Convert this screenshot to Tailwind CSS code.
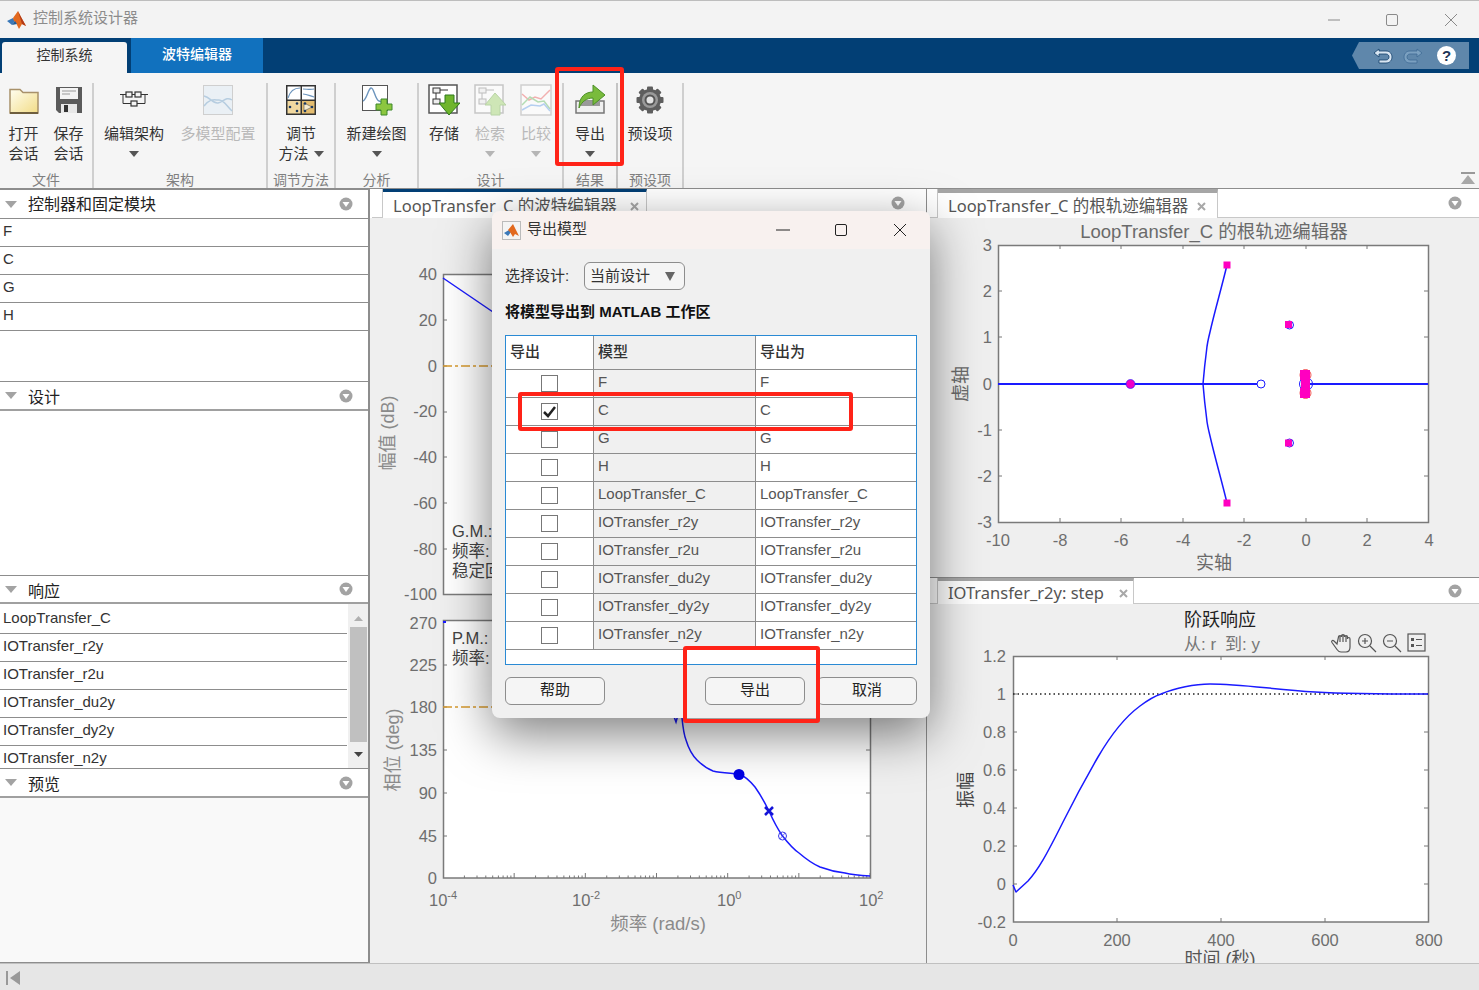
<!DOCTYPE html>
<html lang="zh">
<head>
<meta charset="utf-8">
<title>控制系统设计器</title>
<script src="https://cdn.jsdelivr.net/npm/@tailwindcss/browser@4"></script>
</head>
<body class="m-0 overflow-hidden">
<div class="relative w-[1479px] h-[990px] overflow-hidden bg-[#f3f3f3] text-[15px] text-[#333] [font-family:'Liberation_Sans','Noto_Sans_CJK_SC',sans-serif]">

  <!-- title bar -->
  <div class="flex items-center h-[38px] pl-[7px] border-t border-[#bdbdbd] bg-[#f3f3f3]">
    <svg class="w-[20px] h-[20px] mr-[6px]" viewBox="0 0 20 20"><path d="M0 11l6-3 2 3-3 4z" fill="#3a78b8"/><path d="M6 8l5-7 3 6 5 9-4-2-3 5-3-6-2-2z" fill="#e2691f"/><path d="M11 1l3 6 5 9-4-2z" fill="#b33a16"/><path d="M5 15l3-4 2 3z" fill="#1d5a96"/></svg>
    <span class="text-[15px] text-[#8c8c8c] pb-[2px]">控制系统设计器</span>
    <div class="ml-auto flex items-center">
      <svg class="w-[12px] h-[12px] mr-[46px]" viewBox="0 0 12 12"><path d="M0 6h12" stroke="#8a8a8a"/></svg>
      <svg class="w-[12px] h-[12px] mr-[47px]" viewBox="0 0 12 12"><rect x=".5" y=".5" width="11" height="11" rx="1.5" fill="none" stroke="#8a8a8a"/></svg>
      <svg class="w-[12px] h-[12px] mr-[22px]" viewBox="0 0 12 12"><path d="M0 0l12 12M12 0L0 12" stroke="#8a8a8a"/></svg>
    </div>
  </div>

  <!-- ribbon tabs -->
  <div class="flex items-end h-[35px] bg-[#023f75] pl-[2px]">
    <div class="flex items-center justify-center w-[125px] h-[31px] pb-[5px] bg-[#f5f5f5] rounded-t-[3px] text-[14px] text-[#333]">控制系统</div>
    <div class="flex items-center justify-center w-[132px] h-[35px] pb-[2px] ml-[4px] bg-[#1171be] text-[14px] font-medium text-white">波特编辑器</div>
    <div class="ml-auto mr-[10px] mb-[4px] flex items-center h-[27px] w-[117px] bg-[#5f87ab] [clip-path:polygon(7px_0,100%_0,100%_100%,7px_100%,0_50%)]">
      <svg class="w-[20px] h-[18px] ml-[21px]" viewBox="0 0 20 18"><path d="M6 2L1 6l5 4V7h7c2 0 3 1.500 3 3s-1 3-3 3H6v3h7c4 0 6-3 6-6s-2-6-6-6H6z" fill="#d9e6f2" stroke="#123f6b" stroke-width=".8"/></svg>
      <svg class="w-[20px] h-[18px] ml-[10px]" viewBox="0 0 20 18"><path d="M14 2l5 4-5 4V7H7C5 7 4 8.500 4 10s1 3 3 3h7v3H7c-4 0-6-3-6-6s2-6 6-6h7z" fill="#7ba0c0" stroke="#3f6b94" stroke-width=".8"/></svg>
      <div class="ml-[14px] flex items-center justify-center w-[19px] h-[19px] rounded-full bg-white text-[#1d3557] text-[15px] font-bold leading-none">?</div>
    </div>
  </div>

  <!-- toolstrip -->
  <div class="flex h-[115px] bg-[#f5f5f5] pt-[10px] text-[15px] text-[#333]">
    <!-- 文件 -->
    <div class="flex flex-col w-[94px] border-r-2 border-[#cfcfcf]">
      <div class="flex flex-1 pl-[1px] pt-[1px]">
        <div class="flex flex-col items-center w-[45px]">
          <svg class="w-[32px] h-[32px]" viewBox="0 0 32 32"><defs><linearGradient id="fo" x1="0" y1="0" x2="1" y2="1"><stop offset="0" stop-color="#fffef0"/><stop offset="1" stop-color="#f2dc86"/></linearGradient></defs><path d="M2 8V5.500h10l3 3h15V29H2z" fill="url(#fo)" stroke="#a8916a" stroke-width="1.500"/><path d="M2 29h28" stroke="#6e5e3e" stroke-width="2"/></svg>
          <div class="mt-[8px] leading-[20px] text-center">打开<br>会话</div>
        </div>
        <div class="flex flex-col items-center w-[45px]">
          <svg class="w-[32px] h-[32px]" viewBox="0 0 32 32"><path d="M3 3h26v26H6l-3-3z" fill="#5b5b5b"/><rect x="7" y="4" width="18" height="11" fill="#f4f4f4"/><path d="M9 7h14M9 10h8" stroke="#9a9a9a"/><rect x="8" y="20" width="16" height="9" fill="#e8e8e8"/><rect x="11" y="21" width="4" height="7" fill="#333"/></svg>
          <div class="mt-[8px] leading-[20px] text-center">保存<br>会话</div>
        </div>
      </div>
      <div class="h-[20px] text-center text-[14px] text-[#808080] leading-[24px]">文件</div>
    </div>
    <!-- 架构 -->
    <div class="flex flex-col w-[174px] border-r-2 border-[#cfcfcf]">
      <div class="flex flex-1 pt-[1px]">
        <div class="flex flex-col items-center w-[80px] ml-0">
          <svg class="w-[32px] h-[32px]" viewBox="0 0 32 32"><g fill="#f5f5f5" stroke="#333" stroke-width="1.200"><rect x="8" y="8" width="6" height="5"/><rect x="17" y="8" width="6" height="5"/><rect x="13" y="17" width="6" height="5"/></g><path d="M2 10.500h6M14 10.500h3M23 10.500h7M5 10.500V19.500h8M19 19.500h8V10.500" fill="none" stroke="#333"/></svg>
          <div class="mt-[8px] leading-[20px] whitespace-nowrap">编辑架构</div>
          <svg class="w-[10px] h-[6px] mt-[7px]" viewBox="0 0 10 6"><path d="M0 0h10L5 6z" fill="#555"/></svg>
        </div>
        <div class="flex flex-col items-center w-[88px] ml-[0px] text-[#b9b9b9]">
          <svg class="w-[32px] h-[32px]" viewBox="0 0 32 32"><rect x="1.500" y="1.500" width="29" height="29" fill="#eaf0f5" stroke="#cfcfcf"/><path d="M2 12c6 1 9 8 14 7s8-7 14-3M2 22c6-8 10-6 15-6s7 5 13 11" fill="none" stroke="#b6cde0" stroke-width="1.500"/></svg>
          <div class="mt-[8px] leading-[20px] whitespace-nowrap">多模型配置</div>
        </div>
      </div>
      <div class="h-[20px] text-center text-[14px] text-[#808080] leading-[24px]">架构</div>
    </div>
    <!-- 调节方法 -->
    <div class="flex flex-col w-[68px] border-r-2 border-[#cfcfcf]">
      <div class="flex flex-col flex-1 items-center pt-[1px]">
        <svg class="w-[32px] h-[32px]" viewBox="0 0 32 32"><rect x="1" y="1" width="30" height="30" fill="#333"/><rect x="2.500" y="2.500" width="13" height="13" fill="#fff"/><rect x="17" y="2.500" width="12.500" height="13" fill="#fff"/><rect x="2.500" y="17" width="13" height="12.500" fill="#f2d9a0"/><rect x="17" y="17" width="12.500" height="12.500" fill="#e4bd70"/><path d="M3 14C5 7 9 4 15 4M18 5c4 0 7 1 11 0M18 10c4 0 7 2 11 3" fill="none" stroke="#6d95bd" stroke-width="1.200"/><path d="M19 19l8 4-8 4z" fill="#f7eccf" stroke="#555" stroke-width=".6"/><g fill="#1d3a60"><circle cx="5" cy="23" r="1.300"/><circle cx="12" cy="19.500" r="1.300"/><circle cx="12" cy="27" r="1.300"/><circle cx="20" cy="19.500" r="1.300"/><circle cx="20" cy="27" r="1.300"/><circle cx="27" cy="23" r="1.300"/></g></svg>
        <div class="mt-[8px] leading-[20px] text-center">调节<br><span class="inline-flex items-center">方法<svg class="w-[10px] h-[6px] ml-[5px]" viewBox="0 0 10 6"><path d="M0 0h10L5 6z" fill="#555"/></svg></span></div>
      </div>
      <div class="h-[20px] text-center text-[14px] text-[#808080] leading-[24px] whitespace-nowrap">调节方法</div>
    </div>
    <!-- 分析 -->
    <div class="flex flex-col w-[83px] border-r-2 border-[#cfcfcf]">
      <div class="flex flex-col flex-1 items-center pt-[1px]">
        <svg class="w-[32px] h-[32px]" viewBox="0 0 32 32"><rect x="1.500" y="1.500" width="25" height="25" fill="#fff" stroke="#555"/><path d="M2 17c4-2 5-12 8-13s4 12 8 13 5 2 8 2" fill="none" stroke="#6d95bd" stroke-width="1.400"/><path d="M20 15h6v5h5v6h-5v5h-6v-5h-5v-6h5z" fill="#8cc63f" stroke="#3f8a2c"/></svg>
        <div class="mt-[8px] leading-[20px] whitespace-nowrap">新建绘图</div>
        <svg class="w-[10px] h-[6px] mt-[7px]" viewBox="0 0 10 6"><path d="M0 0h10L5 6z" fill="#555"/></svg>
      </div>
      <div class="h-[20px] text-center text-[14px] text-[#808080] leading-[24px]">分析</div>
    </div>
    <!-- 设计 -->
    <div class="flex flex-col w-[145px] border-r-2 border-[#cfcfcf]">
      <div class="flex flex-1 pl-[2px] pt-[1px]">
        <div class="flex flex-col items-center w-[46px]">
          <svg class="w-[32px] h-[32px]" viewBox="0 0 32 32"><rect x="1" y="1" width="28" height="28" fill="#fff" stroke="#555" stroke-width="1.500"/><g fill="#eee" stroke="#333"><rect x="5" y="4" width="7" height="5"/><rect x="5" y="15" width="7" height="5"/></g><path d="M8 9v6M12 6h8" stroke="#333"/><path d="M17 11h9v8h6L21 31 11 19h6z" fill="#6fb52c" stroke="#2f7a1d"/></svg>
          <div class="mt-[8px] leading-[20px]">存储</div>
        </div>
        <div class="flex flex-col items-center w-[46px] text-[#b9b9b9]">
          <svg class="w-[32px] h-[32px] opacity-50" viewBox="0 0 32 32"><rect x="1" y="1" width="28" height="28" fill="#fff" stroke="#999" stroke-width="1.500"/><g fill="#eee" stroke="#888"><rect x="5" y="4" width="7" height="5"/><rect x="5" y="15" width="7" height="5"/></g><path d="M8 9v6M12 6h8" stroke="#888"/><path d="M17 31V21h-6L21 9l11 12h-6v10z" fill="#a8d878" stroke="#7fb45a"/></svg>
          <div class="mt-[8px] leading-[20px]">检索</div>
          <svg class="w-[10px] h-[6px] mt-[7px]" viewBox="0 0 10 6"><path d="M0 0h10L5 6z" fill="#b5b5b5"/></svg>
        </div>
        <div class="flex flex-col items-center w-[46px] text-[#b9b9b9]">
          <svg class="w-[32px] h-[32px]" viewBox="0 0 32 32"><rect x="1" y="1" width="30" height="30" fill="#fafafa" stroke="#cfcfcf" stroke-width="1.500"/><path d="M2 10l7 6 6-3 6 2 9-9" fill="none" stroke="#f2b0b0" stroke-width="1.500"/><path d="M2 21l8-8 8 5 6-1 6 8" fill="none" stroke="#b4dcb4" stroke-width="1.500"/><path d="M2 26l9-5 9 1 4-2 6 7" fill="none" stroke="#b5cff0" stroke-width="1.500"/></svg>
          <div class="mt-[8px] leading-[20px]">比较</div>
          <svg class="w-[10px] h-[6px] mt-[7px]" viewBox="0 0 10 6"><path d="M0 0h10L5 6z" fill="#b5b5b5"/></svg>
        </div>
      </div>
      <div class="h-[20px] text-center text-[14px] text-[#808080] leading-[24px]">设计</div>
    </div>
    <!-- 结果 -->
    <div class="flex flex-col w-[54px] border-r-2 border-[#c4c4c4]">
      <div class="flex flex-col flex-1 items-center pt-[1px]">
        <svg class="w-[32px] h-[32px]" viewBox="0 0 32 32"><rect x="2" y="17" width="28" height="12" fill="#f0f0f0" stroke="#777" stroke-width="1.500"/><rect x="6" y="17" width="20" height="5" fill="#999"/><path d="M5 24C5 12 12 8 19 8V1l12 10-12 10v-7c-6 0-11 3-14 10z" fill="#79bb3c" stroke="#4c8f28"/></svg>
        <div class="mt-[8px] leading-[20px]">导出</div>
        <svg class="w-[10px] h-[6px] mt-[7px]" viewBox="0 0 10 6"><path d="M0 0h10L5 6z" fill="#555"/></svg>
      </div>
      <div class="h-[20px] text-center text-[14px] text-[#808080] leading-[24px]">结果</div>
    </div>
    <!-- 预设项 -->
    <div class="flex flex-col w-[66px] border-r-2 border-[#cfcfcf]">
      <div class="flex flex-col flex-1 items-center pt-[1px]">
        <svg class="w-[32px] h-[32px]" viewBox="0 0 32 32"><g fill="#5e5e5e"><circle cx="16" cy="16" r="11"/><rect x="13" y="2.500" width="6" height="27" rx="1"/><rect x="13" y="2.500" width="6" height="27" rx="1" transform="rotate(45 16 16)"/><rect x="13" y="2.500" width="6" height="27" rx="1" transform="rotate(90 16 16)"/><rect x="13" y="2.500" width="6" height="27" rx="1" transform="rotate(135 16 16)"/></g><circle cx="16" cy="16" r="8" fill="#9a9a9a"/><circle cx="16" cy="16" r="5.500" fill="#555"/><circle cx="16" cy="16" r="3.500" fill="#e4e4e4"/></svg>
        <div class="mt-[8px] leading-[20px] whitespace-nowrap">预设项</div>
      </div>
      <div class="h-[20px] text-center text-[14px] text-[#808080] leading-[24px]">预设项</div>
    </div>
    <div class="flex-1 flex items-end justify-end pr-[4px] pb-[3px]">
      <svg class="w-[14px] h-[13px]" viewBox="0 0 14 13"><path d="M0 1h14" stroke="#999" stroke-width="2"/><path d="M7 3l7 9H0z" fill="#a8a8a8"/></svg>
    </div>
  </div>

  <!-- main -->
  <div class="flex h-[775px]">
    <!-- left column -->
    <div class="flex flex-col w-[370px] border-r-2 border-[#8d8d8d] bg-white">
      <div class="flex items-center h-[31px] border-t-2 border-b border-[#8d8d8d] pl-[5px] pr-[15px] text-[16px] text-[#222]">
        <svg class="w-[12px] h-[7px] mr-[11px]" viewBox="0 0 12 7"><path d="M0 0h12L6 7z" fill="#a3a3a3"/></svg><span class="mt-[2px]">控制器和固定模块</span>
        <svg class="ml-auto w-[14px] h-[14px]" viewBox="0 0 14 14"><circle cx="7" cy="7" r="6.500" fill="#a3a3a3"/><path d="M3.500 5h7L7 10z" fill="#fff"/></svg>
      </div>
      <div class="flex items-center h-[28px] border-b border-[#8d8d8d] pl-[3px] pb-[3px]">F</div>
      <div class="flex items-center h-[28px] border-b border-[#8d8d8d] pl-[3px] pb-[3px]">C</div>
      <div class="flex items-center h-[28px] border-b border-[#8d8d8d] pl-[3px] pb-[3px]">G</div>
      <div class="flex items-center h-[28px] border-b border-[#8d8d8d] pl-[3px] pb-[3px]">H</div>
      <div class="h-[51px] border-b border-[#8d8d8d]"></div>
      <div class="flex items-center h-[29px] border-b-2 border-[#a0a0a0] pl-[5px] pr-[15px] text-[16px] text-[#222]">
        <svg class="w-[12px] h-[7px] mr-[11px]" viewBox="0 0 12 7"><path d="M0 0h12L6 7z" fill="#a3a3a3"/></svg><span class="mt-[4px]">设计</span>
        <svg class="ml-auto w-[14px] h-[14px]" viewBox="0 0 14 14"><circle cx="7" cy="7" r="6.500" fill="#a3a3a3"/><path d="M3.500 5h7L7 10z" fill="#fff"/></svg>
      </div>
      <div class="h-[165px] border-b border-[#8d8d8d]"></div>
      <div class="flex items-center h-[28px] border-b-2 border-[#a0a0a0] pl-[5px] pr-[15px] text-[16px] text-[#222]">
        <svg class="w-[12px] h-[7px] mr-[11px]" viewBox="0 0 12 7"><path d="M0 0h12L6 7z" fill="#a3a3a3"/></svg><span class="mt-[5px]">响应</span>
        <svg class="ml-auto w-[14px] h-[14px]" viewBox="0 0 14 14"><circle cx="7" cy="7" r="6.500" fill="#a3a3a3"/><path d="M3.500 5h7L7 10z" fill="#fff"/></svg>
      </div>
      <div class="flex h-[165px] border-b border-[#8d8d8d] overflow-hidden">
        <div class="flex-1 pt-[2px]">
          <div class="flex items-center h-[28px] border-b border-[#8d8d8d] pl-[3px] pb-[3px]">LoopTransfer_C</div>
          <div class="flex items-center h-[28px] border-b border-[#8d8d8d] pl-[3px] pb-[3px]">IOTransfer_r2y</div>
          <div class="flex items-center h-[28px] border-b border-[#8d8d8d] pl-[3px] pb-[3px]">IOTransfer_r2u</div>
          <div class="flex items-center h-[28px] border-b border-[#8d8d8d] pl-[3px] pb-[3px]">IOTransfer_du2y</div>
          <div class="flex items-center h-[28px] border-b border-[#8d8d8d] pl-[3px] pb-[3px]">IOTransfer_dy2y</div>
          <div class="flex items-center h-[24px] pl-[3px]">IOTransfer_n2y</div>
        </div>
        <div class="flex flex-col items-center w-[20px] ml-[1px] bg-[#f0f0f0] pt-[12px]">
          <svg class="w-[9px] h-[5px]" viewBox="0 0 9 5"><path d="M0 5h9L4.500 0z" fill="#b0b0b0"/></svg>
          <div class="w-[17px] h-[115px] mt-[6px] bg-[#c0c0c0]"></div>
          <svg class="w-[9px] h-[5px] mt-[10px]" viewBox="0 0 9 5"><path d="M0 0h9L4.500 5z" fill="#444"/></svg>
        </div>
      </div>
      <div class="flex items-center h-[29px] border-b-2 border-[#a0a0a0] pl-[5px] pr-[15px] text-[16px] text-[#222]">
        <svg class="w-[12px] h-[7px] mr-[11px]" viewBox="0 0 12 7"><path d="M0 0h12L6 7z" fill="#a3a3a3"/></svg><span class="mt-[4px]">预览</span>
        <svg class="ml-auto w-[14px] h-[14px]" viewBox="0 0 14 14"><circle cx="7" cy="7" r="6.500" fill="#a3a3a3"/><path d="M3.500 5h7L7 10z" fill="#fff"/></svg>
      </div>
      <div class="flex-1 bg-[#f9f9f9] border-b border-[#8d8d8d]"></div>
    </div>

    <!-- middle column -->
    <div class="flex flex-col w-[557px] border-r border-[#8d8d8d] bg-[#efefef]">
      <div class="flex h-[30px] bg-white border-t border-[#8d8d8d] relative">
        <div class="w-[11px] ml-[2px] border-r border-b border-[#c8c8c8]"></div>
        <div class="flex items-center w-[264px] border-t-[3px] border-r border-t-[#023f75] border-r-[#c8c8c8] bg-white pl-[10px] pr-[7px] pt-[3px] [font-family:'Noto_Sans','Noto_Sans_CJK_SC',sans-serif] text-[16.5px] text-[#555] whitespace-nowrap">LoopTransfer_C 的波特编辑器<svg class="ml-auto w-[9px] h-[9px]" viewBox="0 0 9 9"><path d="M1 1l7 7M8 1L1 8" stroke="#a8a8a8" stroke-width="2"/></svg></div>
        <div class="flex-1 flex items-center justify-end pr-[21px] border-b border-[#c8c8c8]"><svg class="w-[14px] h-[14px]" viewBox="0 0 14 14"><circle cx="7" cy="7" r="6.500" fill="#a3a3a3"/><path d="M3.500 5h7L7 10z" fill="#fff"/></svg></div>
      </div>
      <svg class="block w-[556px] h-[745px] text-[16.5px]" viewBox="370 218 556 745" fill="#6e6e6e">
        <defs><path id="dec" d="M21.400 0v-2.500M34 0v-2.500M42.800 0v-2.500M49.700 0v-2.500M55.400 0v-2.500M60.100 0v-2.500M64.300 0v-2.500M67.900 0v-2.500M71.170 0v-5" stroke="#777" fill="none"/></defs>
        <!-- magnitude -->
        <rect x="443.500" y="274.500" width="427" height="320" fill="#fff" stroke="#7a7a7a" stroke-width="1.500"/>
        <path d="M443 320h4M443 366h4M443 412h4M443 457h4M443 503h4M443 549h4" stroke="#777"/>
        <path d="M443 366h50" stroke="#d79a2e" stroke-width="1.500" stroke-dasharray="9 3 3 3"/>
        <path d="M443 278l50 34" stroke="#1a1aff" stroke-width="1.500" fill="none"/>
        <g text-anchor="end">
          <text x="437" y="280">40</text><text x="437" y="326">20</text><text x="437" y="372">0</text><text x="437" y="417">-20</text><text x="437" y="463">-40</text><text x="437" y="509">-60</text><text x="437" y="555">-80</text><text x="437" y="600">-100</text>
        </g>
        <text transform="translate(394 433) rotate(-90)" text-anchor="middle" fill="#8a8a8a" font-size="18">幅值 (dB)</text>
        <g fill="#444" font-size="16.500"><text x="452" y="537">G.M.:</text><text x="452" y="557">频率:</text><text x="452" y="577">稳定回路</text></g>
        <!-- phase -->
        <rect x="443.500" y="620.500" width="427" height="257.500" fill="#fff" stroke="#7a7a7a" stroke-width="1.500"/>
        <path d="M443 665h4M443 707h4M443 750h4M443 793h4M443 836h4M870 665h-4M870 707h-4M870 750h-4M870 793h-4M870 836h-4" stroke="#777"/>
        <use href="#dec" x="443" y="878"/><use href="#dec" x="514.170" y="878"/><use href="#dec" x="585.340" y="878"/><use href="#dec" x="656.510" y="878"/><use href="#dec" x="727.680" y="878"/><use href="#dec" x="798.850" y="878"/>
        <path d="M443 707h60" stroke="#d79a2e" stroke-width="1.500" stroke-dasharray="9 3 3 3"/>
        <path d="M443 622h3" stroke="#1a1aff" stroke-width="2"/>
        <path d="M673 714l3 8 2-7" stroke="#1a1aff" stroke-width="1.500" fill="none"/>
        <path d="M682 718C683 728 684 735 686 740C689 750 692 755 697 760C703 766 708 769 713 771C721 773 730 773 739 774C745 776 750 781 755 787C760 794 765 803 769 811C773 820 777 828 782.500 836C788 843 793 849 799 853C806 859 813 864 820 867C828 870 836 872 845 873C853 875 861 875.500 870 876" fill="none" stroke="#1a1aff" stroke-width="1.500"/>
        <circle cx="739" cy="774.500" r="5.500" fill="#0000e6"/>
        <path d="M765 807l8 8M773 807l-8 8" stroke="#1414d8" stroke-width="2.500"/>
        <circle cx="782.500" cy="836" r="4" fill="none" stroke="#3a3ae8"/><path d="M780 833l5 6M785 833l-5 6" stroke="#3a3ae8" stroke-width=".7"/>
        <g text-anchor="end">
          <text x="437" y="629">270</text><text x="437" y="671">225</text><text x="437" y="713">180</text><text x="437" y="756">135</text><text x="437" y="799">90</text><text x="437" y="842">45</text><text x="437" y="884">0</text>
        </g>
        <text transform="translate(399 750) rotate(-90)" text-anchor="middle" fill="#8a8a8a" font-size="18">相位 (deg)</text>
        <g fill="#444" font-size="16.500"><text x="452" y="644">P.M.:</text><text x="452" y="664">频率:</text></g>
        <text x="429" y="906">10<tspan font-size="11" dy="-7">-4</tspan></text>
        <text x="572" y="906">10<tspan font-size="11" dy="-7">-2</tspan></text>
        <text x="717" y="906">10<tspan font-size="11" dy="-7">0</tspan></text>
        <text x="859" y="906">10<tspan font-size="11" dy="-7">2</tspan></text>
        <text x="658" y="930" text-anchor="middle" fill="#8a8a8a" font-size="18.500">频率 (rad/s)</text>
      </svg>
    </div>

    <!-- right column -->
    <div class="flex flex-col flex-1 bg-[#efefef]">
      <div class="flex h-[30px] bg-white border-t border-[#8d8d8d]">
        <div class="w-[11px] border-r border-b border-[#c8c8c8]"></div>
        <div class="flex items-center w-[280px] border-t-[4px] border-r border-t-[#a6a6a6] border-r-[#c8c8c8] bg-white pl-[10px] pr-[11px] pt-[2px] [font-family:'Noto_Sans','Noto_Sans_CJK_SC',sans-serif] text-[16.5px] text-[#555] whitespace-nowrap">LoopTransfer_C 的根轨迹编辑器<svg class="ml-auto w-[9px] h-[9px]" viewBox="0 0 9 9"><path d="M1 1l7 7M8 1L1 8" stroke="#a8a8a8" stroke-width="2"/></svg></div>
        <div class="flex-1 flex items-center justify-end pr-[17px] border-b border-[#c8c8c8]"><svg class="w-[14px] h-[14px]" viewBox="0 0 14 14"><circle cx="7" cy="7" r="6.500" fill="#a3a3a3"/><path d="M3.500 5h7L7 10z" fill="#fff"/></svg></div>
      </div>
      <svg class="block w-[552px] h-[359px] text-[16.5px]" viewBox="927 218 552 359" fill="#6e6e6e">
        <rect x="998.500" y="245.500" width="430" height="277" fill="#fff" stroke="#7a7a7a" stroke-width="1.500"/>
        <path d="M1060 245v4M1121 245v4M1183 245v4M1244 245v4M1306 245v4M1367 245v4M1060 522v-4M1121 522v-4M1183 522v-4M1244 522v-4M1306 522v-4M1367 522v-4M998 291h4M998 337h4M998 384h4M998 430h4M998 476h4M1428 291h-4M1428 337h-4M1428 384h-4M1428 430h-4M1428 476h-4" stroke="#777"/>
        <path d="M998 384H1261M1306 384h122" stroke="#1a1aff" stroke-width="2"/>
        <path d="M1227 265C1221 290 1215 310 1210 332C1208 340 1207 345 1206.600 350C1205 362 1204 372 1203 384C1204 396 1205 406 1206.600 418C1207 423 1208 428 1210 436C1215 458 1221 478 1227 503" fill="none" stroke="#1a1aff" stroke-width="1.500"/>
        <circle cx="1261" cy="384" r="4" fill="#fff" stroke="#1a1aff"/>
        <circle cx="1289.500" cy="325" r="4" fill="none" stroke="#1a1aff"/><circle cx="1289.500" cy="443" r="4" fill="none" stroke="#1a1aff"/><circle cx="1306" cy="384" r="6.500" fill="none" stroke="#1a1aff"/>
        <circle cx="1130.500" cy="384" r="4.500" fill="#f000c8" stroke="#1a1aff" stroke-width=".6"/>
        <circle cx="1305.500" cy="375" r="5.500" fill="none" stroke="#f03030" stroke-width=".8"/><circle cx="1305.500" cy="393" r="5.500" fill="none" stroke="#f03030" stroke-width=".8"/>
        <g fill="#ff00c0"><rect x="1223.500" y="261.500" width="7" height="7"/><rect x="1223.500" y="499.500" width="7" height="7"/><rect x="1285" y="321" width="7" height="7"/><rect x="1285" y="439.500" width="7" height="7"/><rect x="1300" y="370" width="10" height="10"/><rect x="1301" y="379" width="9" height="9"/><rect x="1300" y="388" width="10" height="10"/></g>
        <text x="1214" y="238" text-anchor="middle" font-size="18.500" fill="#6a6a6a">LoopTransfer_C 的根轨迹编辑器</text>
        <g text-anchor="end"><text x="992" y="251">3</text><text x="992" y="297">2</text><text x="992" y="343">1</text><text x="992" y="390">0</text><text x="992" y="436">-1</text><text x="992" y="482">-2</text><text x="992" y="528">-3</text></g>
        <g text-anchor="middle"><text x="998" y="546">-10</text><text x="1060" y="546">-8</text><text x="1121" y="546">-6</text><text x="1183" y="546">-4</text><text x="1244" y="546">-2</text><text x="1306" y="546">0</text><text x="1367" y="546">2</text><text x="1429" y="546">4</text></g>
        <text x="1214" y="569" text-anchor="middle" font-size="18" fill="#6a6a6a">实轴</text>
        <text transform="translate(967 384) rotate(-90)" text-anchor="middle" font-size="18" fill="#6a6a6a">虚轴</text>
      </svg>
      <div class="flex h-[27px] bg-white border-t border-[#8d8d8d]">
        <div class="w-[11px] border-r border-b border-[#c8c8c8]"></div>
        <div class="flex items-center w-[196px] border-t-[3px] border-r border-t-[#a6a6a6] border-r-[#c8c8c8] bg-white pl-[10px] pr-[5px] pt-[1px] [font-family:'Noto_Sans','Noto_Sans_CJK_SC',sans-serif] text-[16.5px] text-[#555] whitespace-nowrap">IOTransfer_r2y: step<svg class="ml-auto w-[9px] h-[9px]" viewBox="0 0 9 9"><path d="M1 1l7 7M8 1L1 8" stroke="#a8a8a8" stroke-width="2"/></svg></div>
        <div class="flex-1 flex items-center justify-end pr-[17px] border-b border-[#c8c8c8]"><svg class="w-[14px] h-[14px]" viewBox="0 0 14 14"><circle cx="7" cy="7" r="6.500" fill="#a3a3a3"/><path d="M3.500 5h7L7 10z" fill="#fff"/></svg></div>
      </div>
      <svg class="block w-[552px] h-[359px] text-[16.5px]" viewBox="927 604 552 359" fill="#6e6e6e">
        <rect x="1013.500" y="656.500" width="415" height="265.500" fill="#fff" stroke="#7a7a7a" stroke-width="1.500"/>
        <path d="M1117 656v4M1221 656v4M1325 656v4M1117 922v-4M1221 922v-4M1325 922v-4M1013 694h4M1013 732h4M1013 770h4M1013 808h4M1013 846h4M1013 884h4M1428 694h-4M1428 732h-4M1428 770h-4M1428 808h-4M1428 846h-4M1428 884h-4" stroke="#777"/>
        <path d="M1013 694h415" stroke="#222" stroke-width="1.500" stroke-dasharray="1.500 3"/>
        <path d="M1013 885L1016 892L1028 881C1038 870 1046 856 1063 822C1075 798 1087 776 1098 757C1112 733 1125 717 1140 706C1148 700 1155 696 1161 694C1175 688 1195 684 1210 684C1240 684 1270 689 1315 692C1350 694 1390 694 1428 694" fill="none" stroke="#1a1aff" stroke-width="1.500" stroke-linejoin="round"/>
        <text x="1220" y="626" text-anchor="middle" font-size="18" fill="#222">阶跃响应</text>
        <text x="1184" y="650" font-size="17" fill="#777">从: r<tspan dx="9">到: y</tspan></text>
        <g fill="none" stroke="#555" stroke-width="1.200">
          <path d="M1337 644l-3-3c-1.500-1.500-3 0-2 1.500l5 7c1 1.500 2 2.500 4 2.500h5c3 0 4-2 4-5v-8c0-2-2.500-2-2.500 0v-2c0-2-3-2-3 0v-1c0-2-3-2-3 0v1c0-2-3-2-3 0zM1340 636v6M1343 635v7M1346 636v6"/>
          <circle cx="1365" cy="641" r="6.500"/><path d="M1370 646l6 6M1362 641h6M1365 638v6"/>
          <circle cx="1390" cy="641" r="6.500"/><path d="M1395 646l6 6M1387 641h6"/>
          <rect x="1408" y="634" width="17" height="17"/>
        </g>
        <g fill="#555"><rect x="1411" y="638" width="3" height="3"/><rect x="1411" y="644" width="3" height="3"/></g><path d="M1416 639.500h6M1416 645.500h6" stroke="#555" stroke-width="1.200"/>
        <g text-anchor="end"><text x="1006" y="662">1.2</text><text x="1006" y="700">1</text><text x="1006" y="738">0.8</text><text x="1006" y="776">0.6</text><text x="1006" y="814">0.4</text><text x="1006" y="852">0.2</text><text x="1006" y="890">0</text><text x="1006" y="928">-0.2</text></g>
        <g text-anchor="middle"><text x="1013" y="946">0</text><text x="1117" y="946">200</text><text x="1221" y="946">400</text><text x="1325" y="946">600</text><text x="1429" y="946">800</text></g>
        <text transform="translate(972 790) rotate(-90)" text-anchor="middle" font-size="18" fill="#444">振幅</text>
        <text x="1220" y="965" text-anchor="middle" font-size="18" fill="#555">时间 (秒)</text>
      </svg>
    </div>
  </div>

  <!-- status bar -->
  <div class="flex items-center h-[27px] bg-[#e6e6e6] pl-[6px] pt-[2px] border-t border-[#c0c0c0]">
    <svg class="w-[14px] h-[14px]" viewBox="0 0 14 14"><path d="M1 0v14" stroke="#999" stroke-width="2"/><path d="M14 0v14L4 7z" fill="#999"/></svg>
  </div>

  <!-- dialog -->
  <div class="absolute left-[492px] top-[211px] w-[438px] h-[507px] rounded-[8px] bg-[#f0f0f0] shadow-[0_16px_50px_rgba(0,0,0,0.5)] overflow-hidden">
    <div class="flex items-center h-[38px] bg-[#f8f1ef] pl-[10px]">
      <svg class="w-[19px] h-[19px] mr-[6px]" viewBox="0 0 19 19"><rect x=".5" y=".5" width="18" height="18" fill="#f4f4f4" stroke="#bbb"/><path d="M2 12l5-3 2 2-3 4z" fill="#3a78b8"/><path d="M6 9l5-6 6 12-4-2-2 3-3-5z" fill="#e2691f"/></svg>
      <span class="text-[15px] text-[#333] pb-[2px]">导出模型</span>
      <svg class="w-[14px] h-[12px] ml-[189px]" viewBox="0 0 14 12"><path d="M0 6h14" stroke="#222"/></svg>
      <svg class="w-[12px] h-[12px] ml-[45px]" viewBox="0 0 12 12"><rect x=".5" y=".5" width="11" height="11" rx="1.500" fill="none" stroke="#222"/></svg>
      <svg class="w-[12px] h-[12px] ml-[47px]" viewBox="0 0 12 12"><path d="M0 0l12 12M12 0L0 12" stroke="#222"/></svg>
    </div>
    <div class="px-[13px]">
      <div class="flex items-center mt-[13px] h-[28px]">
        <span class="w-[79px] whitespace-nowrap">选择设计:</span>
        <div class="flex items-center w-[101px] h-[28px] border border-[#8d8d8d] rounded-[6px] bg-[#f5f5f5] pl-[5px] pr-[9px]">当前设计<svg class="ml-auto w-[10px] h-[9px]" viewBox="0 0 10 9"><path d="M0 0h10L5 9z" fill="#666"/></svg></div>
      </div>
      <div class="mt-[12px] h-[20px] leading-[20px] font-bold text-[#111] whitespace-nowrap">将模型导出到 MATLAB 工作区</div>
      <div class="mt-[13px] h-[330px] w-[412px] border border-[#2a8ad4] bg-white text-[#555]">
        <div class="grid grid-cols-[88px_162px_1fr] h-[34px] border-b border-[#8d8d8d] text-[#333] font-medium">
          <div class="flex items-center pl-[4px] border-r border-[#8d8d8d]">导出</div>
          <div class="flex items-center pl-[4px] border-r border-[#8d8d8d] bg-[#f0f0f0]">模型</div>
          <div class="flex items-center pl-[4px]">导出为</div>
        </div>
        <div class="grid grid-cols-[88px_162px_1fr] h-[28px] border-b border-[#8d8d8d]"><div class="flex items-center justify-center border-r border-[#8d8d8d]"><span class="w-[17px] h-[17px] border border-[#777] bg-white"></span></div><div class="flex items-center pl-[4px] pb-[3px] border-r border-[#8d8d8d] bg-[#f0f0f0]">F</div><div class="flex items-center pl-[4px] pb-[3px]">F</div></div>
        <div class="grid grid-cols-[88px_162px_1fr] h-[28px] border-b border-[#8d8d8d]"><div class="flex items-center justify-center border-r border-[#8d8d8d]"><span class="flex items-center justify-center w-[17px] h-[17px] border border-[#777] bg-white"><svg class="w-[13px] h-[12px]" viewBox="0 0 13 12"><path d="M1 6l4 4 7-9" fill="none" stroke="#222" stroke-width="2.500"/></svg></span></div><div class="flex items-center pl-[4px] pb-[3px] border-r border-[#8d8d8d] bg-[#f0f0f0]">C</div><div class="flex items-center pl-[4px] pb-[3px]">C</div></div>
        <div class="grid grid-cols-[88px_162px_1fr] h-[28px] border-b border-[#8d8d8d]"><div class="flex items-center justify-center border-r border-[#8d8d8d]"><span class="w-[17px] h-[17px] border border-[#777] bg-white"></span></div><div class="flex items-center pl-[4px] pb-[3px] border-r border-[#8d8d8d] bg-[#f0f0f0]">G</div><div class="flex items-center pl-[4px] pb-[3px]">G</div></div>
        <div class="grid grid-cols-[88px_162px_1fr] h-[28px] border-b border-[#8d8d8d]"><div class="flex items-center justify-center border-r border-[#8d8d8d]"><span class="w-[17px] h-[17px] border border-[#777] bg-white"></span></div><div class="flex items-center pl-[4px] pb-[3px] border-r border-[#8d8d8d] bg-[#f0f0f0]">H</div><div class="flex items-center pl-[4px] pb-[3px]">H</div></div>
        <div class="grid grid-cols-[88px_162px_1fr] h-[28px] border-b border-[#8d8d8d]"><div class="flex items-center justify-center border-r border-[#8d8d8d]"><span class="w-[17px] h-[17px] border border-[#777] bg-white"></span></div><div class="flex items-center pl-[4px] pb-[3px] border-r border-[#8d8d8d] bg-[#f0f0f0]">LoopTransfer_C</div><div class="flex items-center pl-[4px] pb-[3px]">LoopTransfer_C</div></div>
        <div class="grid grid-cols-[88px_162px_1fr] h-[28px] border-b border-[#8d8d8d]"><div class="flex items-center justify-center border-r border-[#8d8d8d]"><span class="w-[17px] h-[17px] border border-[#777] bg-white"></span></div><div class="flex items-center pl-[4px] pb-[3px] border-r border-[#8d8d8d] bg-[#f0f0f0]">IOTransfer_r2y</div><div class="flex items-center pl-[4px] pb-[3px]">IOTransfer_r2y</div></div>
        <div class="grid grid-cols-[88px_162px_1fr] h-[28px] border-b border-[#8d8d8d]"><div class="flex items-center justify-center border-r border-[#8d8d8d]"><span class="w-[17px] h-[17px] border border-[#777] bg-white"></span></div><div class="flex items-center pl-[4px] pb-[3px] border-r border-[#8d8d8d] bg-[#f0f0f0]">IOTransfer_r2u</div><div class="flex items-center pl-[4px] pb-[3px]">IOTransfer_r2u</div></div>
        <div class="grid grid-cols-[88px_162px_1fr] h-[28px] border-b border-[#8d8d8d]"><div class="flex items-center justify-center border-r border-[#8d8d8d]"><span class="w-[17px] h-[17px] border border-[#777] bg-white"></span></div><div class="flex items-center pl-[4px] pb-[3px] border-r border-[#8d8d8d] bg-[#f0f0f0]">IOTransfer_du2y</div><div class="flex items-center pl-[4px] pb-[3px]">IOTransfer_du2y</div></div>
        <div class="grid grid-cols-[88px_162px_1fr] h-[28px] border-b border-[#8d8d8d]"><div class="flex items-center justify-center border-r border-[#8d8d8d]"><span class="w-[17px] h-[17px] border border-[#777] bg-white"></span></div><div class="flex items-center pl-[4px] pb-[3px] border-r border-[#8d8d8d] bg-[#f0f0f0]">IOTransfer_dy2y</div><div class="flex items-center pl-[4px] pb-[3px]">IOTransfer_dy2y</div></div>
        <div class="grid grid-cols-[88px_162px_1fr] h-[28px] border-b border-[#8d8d8d]"><div class="flex items-center justify-center border-r border-[#8d8d8d]"><span class="w-[17px] h-[17px] border border-[#777] bg-white"></span></div><div class="flex items-center pl-[4px] pb-[3px] border-r border-[#8d8d8d] bg-[#f0f0f0]">IOTransfer_n2y</div><div class="flex items-center pl-[4px] pb-[3px]">IOTransfer_n2y</div></div>
      </div>
      <div class="flex mt-[12px]">
        <div class="flex items-center justify-center w-[100px] h-[28px] pb-[2px] border border-[#8d8d8d] rounded-[6px] bg-[#f5f5f5] text-[#222]">帮助</div>
        <div class="flex items-center justify-center w-[100px] h-[28px] pb-[2px] ml-[100px] border border-[#8d8d8d] rounded-[6px] bg-[#f5f5f5] text-[#222]">导出</div>
        <div class="flex items-center justify-center w-[100px] h-[28px] pb-[2px] ml-[12px] border border-[#8d8d8d] rounded-[6px] bg-[#f5f5f5] text-[#222]">取消</div>
      </div>
    </div>
  </div>

  <!-- red annotations -->
  <div class="absolute left-[555px] top-[67px] w-[69px] h-[99px] border-[4px] border-[#ff2318] rounded-[3px]"></div>
  <div class="absolute left-[518px] top-[392px] w-[335px] h-[39px] border-[4px] border-[#ff2318] rounded-[3px]"></div>
  <div class="absolute left-[683px] top-[646px] w-[137px] h-[77px] border-[4px] border-[#ff2318] rounded-[3px]"></div>
</div>
</body>
</html>
